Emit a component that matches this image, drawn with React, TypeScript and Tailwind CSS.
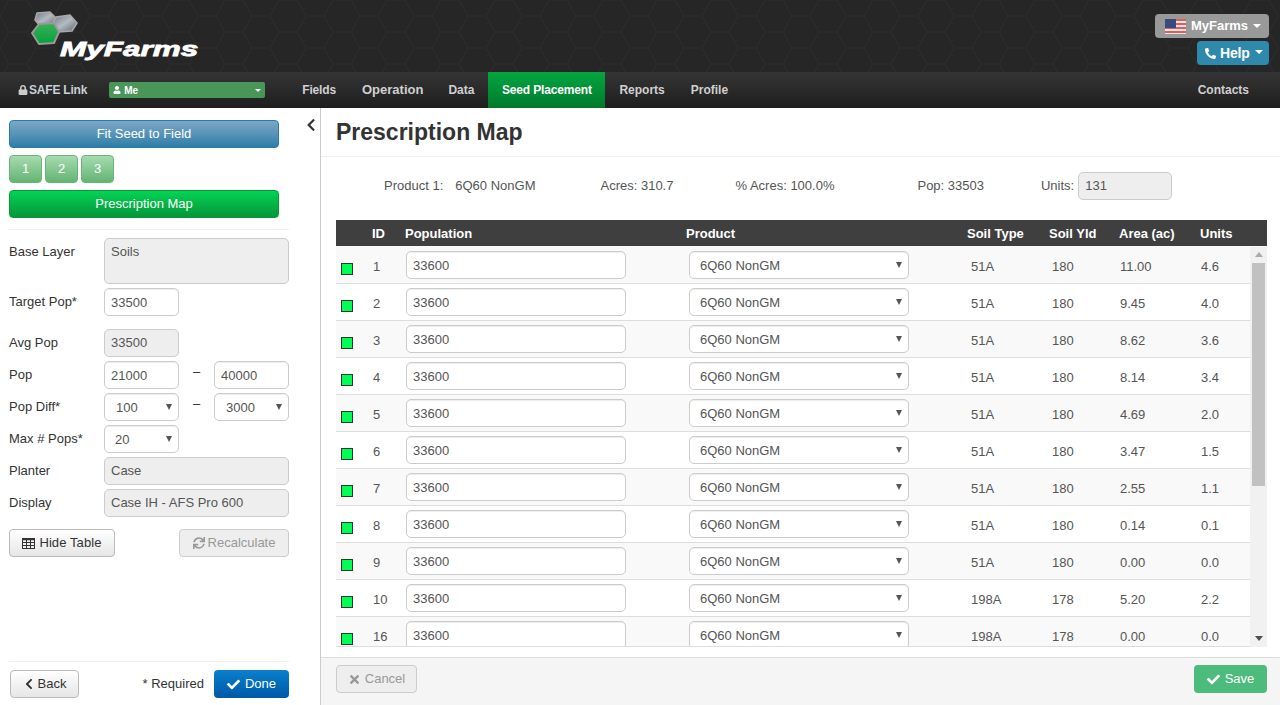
import { FaCheck, FaChevronLeft, FaLock, FaPhoneAlt, FaSync, FaTimes, FaUser } from 'react-icons/fa';

const rows = [
  { id: 1, soil: '51A', yld: 180, area: '11.00', units: '4.6' },
  { id: 2, soil: '51A', yld: 180, area: '9.45', units: '4.0' },
  { id: 3, soil: '51A', yld: 180, area: '8.62', units: '3.6' },
  { id: 4, soil: '51A', yld: 180, area: '8.14', units: '3.4' },
  { id: 5, soil: '51A', yld: 180, area: '4.69', units: '2.0' },
  { id: 6, soil: '51A', yld: 180, area: '3.47', units: '1.5' },
  { id: 7, soil: '51A', yld: 180, area: '2.55', units: '1.1' },
  { id: 8, soil: '51A', yld: 180, area: '0.14', units: '0.1' },
  { id: 9, soil: '51A', yld: 180, area: '0.00', units: '0.0' },
  { id: 10, soil: '198A', yld: 178, area: '5.20', units: '2.2' },
  { id: 16, soil: '198A', yld: 178, area: '0.00', units: '0.0' },
];

const inputCls = 'h-[28px] rounded-[5px] border border-[#ccc] bg-white px-[6px] text-[13px] text-[#555] shadow-[inset_0_1px_1px_rgba(0,0,0,0.075)]';
const readonlyCls = 'flex h-[28px] items-center rounded-[5px] border border-[#ccc] bg-[#eee] px-[6px] text-[13px] text-[#555]';

function Caret({ className = '' }: { className?: string }) {
  return <span className={`h-0 w-0 border-x-[4px] border-t-[4px] border-x-transparent border-t-current ${className}`} />;
}

function SelectBox({ value, width, padding }: { value: string; width: string; padding: string }) {
  return (
    <div className={`relative ${width}`}>
      <select defaultValue={value} className={`${inputCls} block w-full appearance-none pt-[2px] ${padding}`}>
        <option value={value}>{value}</option>
      </select>
      <span className="absolute right-[7px] top-[11px] h-0 w-0 border-x-[3px] border-t-[6px] border-x-transparent border-t-[#555]" />
    </div>
  );
}

function Logo() {
  return (
    <div className="relative h-[72px] w-[200px]">
      <svg width="90" height="50" viewBox="0 0 90 50" className="absolute left-0 top-0">
        <defs>
          <linearGradient id="grey" x1="0" y1="0" x2="1" y2="1">
            <stop offset="0" stopColor="#6f7681" />
            <stop offset="0.5" stopColor="#b4bac2" />
            <stop offset="1" stopColor="#5d636c" />
          </linearGradient>
          <linearGradient id="green" x1="0" y1="0" x2="0" y2="1">
            <stop offset="0" stopColor="#3fae5c" />
            <stop offset="1" stopColor="#00a33a" />
          </linearGradient>
        </defs>
        <path d="M37 13 L50 12 L56 18 L52 25 L40 26 L35 20 Z" fill="url(#grey)" stroke="#a9a9a9" strokeWidth="1.5" strokeLinejoin="round" />
        <path d="M56 17 L70 15 L77 23 L72 31 L58 32 L52 24 Z" fill="url(#grey)" stroke="#a9a9a9" strokeWidth="1.5" strokeLinejoin="round" />
        <path d="M39 24 L54 23 L59 32 L54 43 L39 44 L32 33 Z" fill="url(#green)" stroke="#9a9a9a" strokeWidth="2" strokeLinejoin="round" />
      </svg>
      <span className="absolute left-[60px] top-[38px] origin-left scale-x-[1.5] text-[21px] font-bold italic leading-[21px] text-white [-webkit-text-stroke:0.8px_white]">
        MyFarms
      </span>
    </div>
  );
}

function Flag() {
  return (
    <svg width="21" height="15" viewBox="0 0 21 15" className="shrink-0">
      <rect width="21" height="15" fill="#e9e4e4" />
      <rect y="0" width="21" height="2" fill="#d9605f" />
      <rect y="4" width="21" height="2" fill="#d9605f" />
      <rect y="8" width="21" height="2" fill="#d9605f" />
      <rect y="12" width="21" height="2" fill="#d9605f" />
      <rect width="11" height="9" fill="#3d4a7f" />
    </svg>
  );
}

function Header() {
  return (
    <div className="relative flex h-[72px] shrink-0 justify-between overflow-hidden bg-[#262626] pr-[11px]">
      <svg className="absolute inset-0 h-full w-full" aria-hidden="true">
        <defs>
          <pattern id="hex" width="54" height="32" patternUnits="userSpaceOnUse">
            <path d="M9 0 L0 16 L9 32 M9 0 H27 L36 16 L27 32 H9 M36 16 H54" fill="none" stroke="#2d2d2d" strokeWidth="1" />
          </pattern>
        </defs>
        <rect width="100%" height="100%" fill="url(#hex)" />
      </svg>
      <div className="relative">
        <Logo />
      </div>
      <div className="relative flex flex-col items-end gap-[3px] pt-[14px]">
        <div className="flex h-[24px] w-[114px] items-center gap-[5px] rounded-[4px] bg-[#999] pl-[10px] text-[13px] font-bold text-white">
          <Flag />
          <span>MyFarms</span>
          <Caret className="ml-0" />
        </div>
        <div className="flex h-[24px] w-[72px] items-center gap-[4px] rounded-[4px] bg-[#2e89ad] pl-[8px] text-[13px] font-bold text-white">
          <FaPhoneAlt className="text-[11px]" />
          <span className="text-[14px] tracking-[-0.2px]">Help</span>
          <Caret className="ml-[1px] mb-[2px]" />
        </div>
      </div>
    </div>
  );
}

function NavItem({ label, className }: { label: string; className: string }) {
  return <span className={`font-bold text-[#d0d0d0] ${className}`}>{label}</span>;
}

function Nav() {
  return (
    <div className="flex h-[36px] shrink-0 items-center bg-gradient-to-b from-[#353535] to-[#1e1e1e] text-[12px]">
      <FaLock className="ml-[18px] text-[10px] text-[#ccc]" />
      <span className="ml-[1px] font-bold tracking-[-0.2px] text-[#c8d0d8]">SAFE Link</span>
      <div className="ml-[22px] flex h-[16px] w-[156px] items-center rounded-[2px] bg-[#4a9659] pl-[4px] pr-[4px] text-[10px] font-bold text-white">
        <FaUser className="mr-[3px] text-[8px]" />
        <span>Me</span>
        <span className="ml-auto h-0 w-0 border-x-[3px] border-t-[3px] border-x-transparent border-t-white" />
      </div>
      <NavItem label="Fields" className="ml-[37px] tracking-[-0.15px]" />
      <NavItem label="Operation" className="ml-[26px] text-[13px]" />
      <NavItem label="Data" className="ml-[25px]" />
      <div className="ml-[14px] flex h-[36px] w-[117px] items-center justify-center bg-gradient-to-b from-[#03a640] to-[#007a2c] font-bold tracking-[-0.15px] text-white">
        Seed Placement
      </div>
      <NavItem label="Reports" className="ml-[14px]" />
      <NavItem label="Profile" className="ml-[26px]" />
      <NavItem label="Contacts" className="ml-auto mr-[31px]" />
    </div>
  );
}

function FormRow({ label, children, className = '' }: { label: string; children: React.ReactNode; className?: string }) {
  return (
    <div className={`flex items-center ${className}`}>
      <span className="w-[95px] shrink-0 text-[13px] text-[#333]">{label}</span>
      {children}
    </div>
  );
}

function Dash() {
  return <span className="w-[35px] pb-[8px] text-center text-[13px] leading-[15px] text-[#333]">–</span>;
}

function TableIcon() {
  return (
    <svg width="13" height="11" viewBox="0 0 13 11" fill="none" stroke="#333" strokeWidth="1">
      <rect x="0.5" y="0.5" width="12" height="10" />
      <path d="M0.5 1.5 H12.5" strokeWidth="1.5" />
      <path d="M0.5 4.5 H12.5 M0.5 7.5 H12.5 M4.5 0.5 V10.5 M8.5 0.5 V10.5" />
    </svg>
  );
}

function Sidebar() {
  return (
    <div className="relative flex w-[321px] shrink-0 flex-col border-r border-[#ccc] pb-[7px] pl-[9px] pr-[31px] pt-[12px]">
      <FaChevronLeft className="absolute left-[304px] top-[10px] text-[14px] text-[#333]" />
      <div className="flex h-[28px] w-[270px] items-center justify-center rounded-[4px] border border-[#2b7ba3] bg-gradient-to-b from-[#7ca8c6] to-[#2a7ea8] text-[13px] text-white">
        Fit Seed to Field
      </div>
      <div className="mt-[7px] flex gap-[3px]">
        {['1', '2', '3'].map((n) => (
          <div key={n} className="flex h-[28px] w-[33px] items-center justify-center rounded-[4px] border border-[#6ab57a] bg-gradient-to-b from-[#a6dbaf] to-[#62b473] text-[13px] text-white">
            {n}
          </div>
        ))}
      </div>
      <div className="mt-[7px] flex h-[28px] w-[270px] items-center justify-center rounded-[4px] border border-[#05993c] bg-gradient-to-b from-[#03d455] to-[#059639] text-[13px] text-white">
        Prescription Map
      </div>
      <div className="mt-[11px] h-px bg-[#eee]" />
      <div className="mt-[8px] flex">
        <span className="w-[95px] shrink-0 pt-[6px] text-[13px] leading-[16px] text-[#333]">Base Layer</span>
        <div className="h-[46px] flex-1 rounded-[5px] border border-[#ccc] bg-[#eee] px-[6px] pt-[5px] text-[13px] leading-[16px] text-[#555]">Soils</div>
      </div>
      <FormRow label="Target Pop*" className="mt-[4px]">
        <input readOnly value="33500" className={`${inputCls} w-[75px]`} />
      </FormRow>
      <FormRow label="Avg Pop" className="mt-[13px]">
        <div className={`${readonlyCls} w-[75px]`}>33500</div>
      </FormRow>
      <FormRow label="Pop" className="mt-[4px]">
        <input readOnly value="21000" className={`${inputCls} w-[75px]`} />
        <Dash />
        <input readOnly value="40000" className={`${inputCls} w-[75px]`} />
      </FormRow>
      <FormRow label="Pop Diff*" className="mt-[4px]">
        <SelectBox value="100" width="w-[75px]" padding="pl-[11px]" />
        <Dash />
        <SelectBox value="3000" width="w-[75px]" padding="pl-[11px]" />
      </FormRow>
      <FormRow label="Max # Pops*" className="mt-[4px]">
        <SelectBox value="20" width="w-[75px]" padding="pl-[10px]" />
      </FormRow>
      <FormRow label="Planter" className="mt-[4px]">
        <div className={`${readonlyCls} flex-1`}>Case</div>
      </FormRow>
      <FormRow label="Display" className="mt-[4px]">
        <div className={`${readonlyCls} flex-1`}>Case IH - AFS Pro 600</div>
      </FormRow>
      <div className="mt-[12px] flex justify-between">
        <div className="flex h-[28px] w-[106px] items-center justify-center gap-[4px] rounded-[4px] border border-[#bbb] bg-gradient-to-b from-white to-[#e6e6e6] text-[13px] tracking-[0.1px] text-[#333]">
          <TableIcon />
          Hide Table
        </div>
        <div className="flex h-[28px] w-[110px] items-center justify-center gap-[3px] rounded-[4px] border border-[#ccc] bg-[#eee] text-[13px] text-[#999]">
          <FaSync className="text-[12px]" />
          Recalculate
        </div>
      </div>
      <div className="mt-auto h-px bg-[#eee]" />
      <div className="mt-[8px] flex items-center">
        <div className="ml-[1px] flex h-[28px] w-[69px] items-center justify-center gap-[3px] rounded-[4px] border border-[#bbb] bg-gradient-to-b from-white to-[#e6e6e6] text-[13px] text-[#333]">
          <FaChevronLeft className="text-[12px]" />
          Back
        </div>
        <span className="ml-auto text-[13px] text-[#333]">* Required</span>
        <div className="ml-[10px] flex h-[28px] w-[75px] items-center justify-center gap-[5px] rounded-[4px] bg-gradient-to-b from-[#0b80cc] to-[#0058a8] text-[13px] text-white">
          <FaCheck className="text-[13px]" />
          Done
        </div>
      </div>
    </div>
  );
}

function TableRow({ row, index }: { row: (typeof rows)[number]; index: number }) {
  return (
    <div className={`flex h-[37px] shrink-0 border-b border-[#ddd] text-[13px] text-[#555] ${index % 2 === 0 ? 'bg-[#f9f9f9]' : 'bg-white'}`}>
      <div className="w-[37px] shrink-0 pl-[5px] pt-[16px]">
        <div className="h-[12px] w-[12px] border border-[#333] bg-[#00ff55]" />
      </div>
      <span className="w-[33px] shrink-0 pt-[10px]">{row.id}</span>
      <div className="w-[283px] shrink-0 pt-[4px]">
        <input readOnly value="33600" className={`${inputCls} w-[220px]`} />
      </div>
      <div className="w-[282px] shrink-0 pt-[4px]">
        <SelectBox value="6Q60 NonGM" width="w-[220px]" padding="pl-[10px]" />
      </div>
      <span className="w-[81px] shrink-0 pt-[10px]">{row.soil}</span>
      <span className="w-[68px] shrink-0 pt-[10px]">{row.yld}</span>
      <span className="w-[81px] shrink-0 pt-[10px]">{row.area}</span>
      <span className="pt-[10px]">{row.units}</span>
    </div>
  );
}

function Scrollbar() {
  return (
    <div className="flex w-[17px] shrink-0 flex-col items-center bg-[#f1f1f1]">
      <div className="mt-[5px] h-0 w-0 border-x-[4px] border-b-[5px] border-x-transparent border-b-[#aaa]" />
      <div className="mt-[6px] h-[223px] w-[13px] bg-[#c1c1c1]" />
      <div className="mb-[6px] mt-auto h-0 w-0 border-x-[4px] border-t-[5px] border-x-transparent border-t-[#505050]" />
    </div>
  );
}

function Main() {
  return (
    <div className="flex min-w-0 flex-1 flex-col">
      <div className="flex h-[49px] shrink-0 items-center border-b border-[#eee] pl-[15px] text-[23px] font-bold text-[#333]">
        Prescription Map
      </div>
      <div className="flex h-[63px] shrink-0 items-center pb-[5px] text-[13px] text-[#555]">
        <span className="ml-[63px]">Product 1:</span>
        <span className="ml-[12px]">6Q60 NonGM</span>
        <span className="ml-[65px]">Acres: 310.7</span>
        <span className="ml-[62px]">% Acres: 100.0%</span>
        <span className="ml-[83px]">Pop: 33503</span>
        <span className="ml-[57px]">Units:</span>
        <div className={`${readonlyCls} ml-[4px] w-[94px]`}>131</div>
      </div>
      <div className="ml-[15px] flex h-[27px] w-[931px] shrink-0 items-center border-b border-[#f9f9f9] bg-[#3f3f3f] pt-[1px] text-[13px] font-bold text-white">
        <span className="ml-[36px] w-[33px]">ID</span>
        <span className="w-[281px]">Population</span>
        <span className="w-[281px]">Product</span>
        <span className="w-[82px]">Soil Type</span>
        <span className="w-[70px]">Soil Yld</span>
        <span className="w-[81px]">Area (ac)</span>
        <span>Units</span>
      </div>
      <div className="ml-[15px] flex h-[400px] w-[931px] shrink-0 overflow-hidden">
        <div className="flex flex-1 flex-col overflow-hidden border-b border-[#ddd]">
          {rows.map((row, i) => (
            <TableRow key={row.id} row={row} index={i} />
          ))}
        </div>
        <Scrollbar />
      </div>
      <div className="mt-auto flex h-[48px] shrink-0 items-start justify-between border-t border-[#ddd] bg-[#f5f5f5] pl-[15px] pr-[13px] pt-[7px]">
        <div className="flex h-[28px] w-[81px] items-center justify-center gap-[4px] rounded-[4px] border border-[#ccc] bg-[#eee] text-[13px] text-[#999]">
          <FaTimes className="text-[13px]" />
          Cancel
        </div>
        <div className="flex h-[28px] w-[73px] items-center justify-center gap-[5px] rounded-[4px] bg-[#4cbb7b] text-[13px] text-white">
          <FaCheck className="text-[13px]" />
          Save
        </div>
      </div>
    </div>
  );
}

export default function App() {
  return (
    <div className="flex h-[705px] w-[1280px] flex-col overflow-hidden bg-white font-['Liberation_Sans',Arial,sans-serif]">
      <Header />
      <Nav />
      <div className="flex min-h-0 flex-1">
        <Sidebar />
        <Main />
      </div>
    </div>
  );
}
